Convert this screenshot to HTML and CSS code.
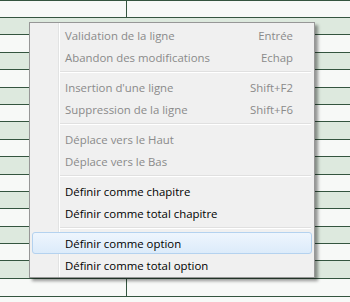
FILE: index.html
```html
<!DOCTYPE html>
<html lang="fr">
<head>
  <meta charset="UTF-8">
  <title>Menu contextuel</title>
  <link rel="stylesheet" href="styles.css">
</head>
<body>
  <div class="sheet">
    <!-- Grid rows behind the menu -->
    <div class="row row-head"><div class="cell cell-first"></div><div class="cell"></div></div>
    <div class="row green"></div>
    <div class="row"></div>
    <div class="row green"></div>
    <div class="row"></div>
    <div class="row green"></div>
    <div class="row"></div>
    <div class="row green"></div>
    <div class="row"></div>
    <div class="row green"></div>
    <div class="row"></div>
    <div class="row green"></div>
    <div class="row"></div>
    <div class="row green"></div>
    <div class="row"></div>
    <div class="row green"></div>
    <div class="row row-foot"><div class="cell cell-first"></div><div class="cell"></div></div>

    <!-- Context menu -->
    <div class="menu">
      <div class="item disabled"><span>Validation de la ligne</span><span class="key">Entrée</span></div>
      <div class="item disabled"><span>Abandon des modifications</span><span class="key">Echap</span></div>
      <div class="sep"></div>
      <div class="item disabled"><span>Insertion d'une ligne</span><span class="key">Shift+F2</span></div>
      <div class="item disabled"><span>Suppression de la ligne</span><span class="key">Shift+F6</span></div>
      <div class="sep"></div>
      <div class="item disabled"><span>Déplace vers le Haut</span></div>
      <div class="item disabled"><span>Déplace vers le Bas</span></div>
      <div class="sep"></div>
      <div class="item"><span>Définir comme chapitre</span></div>
      <div class="item"><span>Définir comme total chapitre</span></div>
      <div class="sep"></div>
      <div class="item active"><span>Définir comme option</span></div>
      <div class="item"><span>Définir comme total option</span></div>
    </div>
  </div>
</body>
</html>
```

FILE: styles.css
```css
:root {
  --line: #34553f;
  --green: #dde9de;
  --white: #f7f9f7;
  --menu-bg: #f0f0f0;
  --disabled: #8a8a8a;
}
* {
  box-sizing: border-box;
}
body {
  margin: 0;
  background: var(--white);
  font-family: "Open Sans", "Noto Sans", sans-serif;
  font-size: 11.4px;
  overflow: hidden;
}
.sheet {
  position: relative;
  width: 350px;
  height: 302px;
}
.row {
  height: 17.4px;
  border-bottom: 1px solid var(--line);
  background: var(--white);
}
.row.green {
  background: var(--green);
}
.row-head {
  height: 18px;
  border-top: 1px solid var(--line);
  display: flex;
}
.row-foot {
  height: 18.4px;
  display: flex;
}
.cell {
  flex: 1;
}
.cell-first {
  flex: 0 0 127px;
  border-right: 1px solid var(--line);
}

/* menu overlay */
.menu {
  position: absolute;
  left: 29px;
  top: 22px;
  width: 286px;
  padding: 1px 2px;
  border: 1px solid #979797;
  background:
    linear-gradient(to right, transparent 28px, #e2e3e3 28px, #e2e3e3 29px, #ffffff 29px, #ffffff 30px, transparent 30px),
    var(--menu-bg);
  box-shadow: 3px 3px 3px rgba(0, 0, 0, 0.4);
  color: #000;
}
.item {
  display: flex;
  justify-content: space-between;
  align-items: center;
  height: 22px;
  padding: 0 18px 0 32px;
  border: 1px solid transparent;
  border-radius: 3px;
}
.item.disabled {
  color: var(--disabled);
}
.item.active {
  background: linear-gradient(to bottom, #eef5fd, #dcebfa);
  border-color: #b4d2ef;
}
.key {
  text-align: right;
}
.sep {
  height: 8px;
  margin: 0 1px 0 28px;
  background: linear-gradient(to bottom, transparent 3px, #e0e0e0 3px, #e0e0e0 4px, #ffffff 4px, #ffffff 5px, transparent 5px);
}
```
